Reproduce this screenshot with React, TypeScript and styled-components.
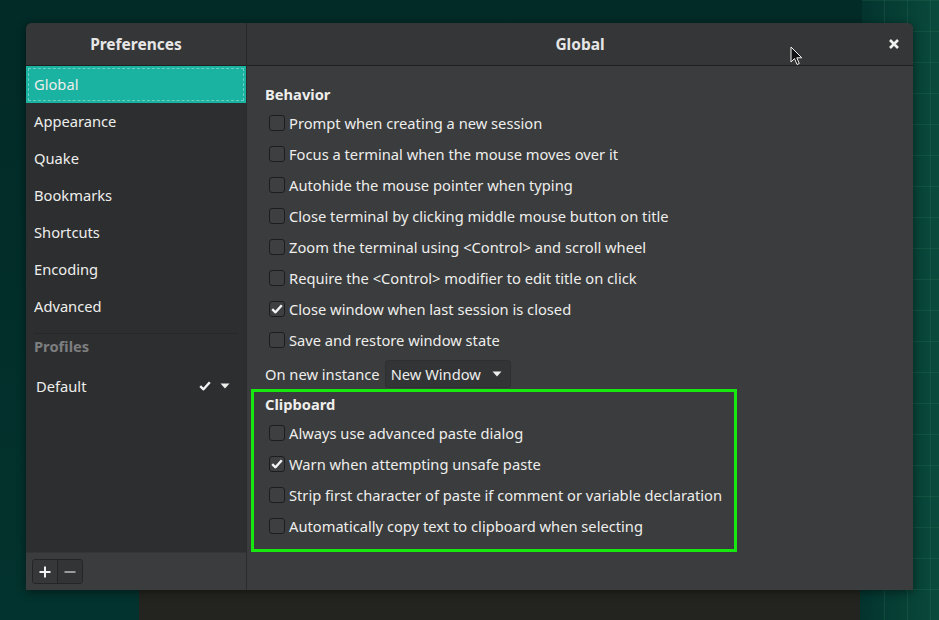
import React from "react";
import styled, { createGlobalStyle } from "styled-components";

const Global = createGlobalStyle`
  html, body { margin: 0; padding: 0; }
  body {
    width: 939px;
    height: 620px;
    overflow: hidden;
    font-family: "Noto Sans", "DejaVu Sans", sans-serif;
    font-size: 14.7px;
    color: #eeeeec;
  }
`;

const Desktop = styled.div`
  position: relative;
  width: 939px;
  height: 620px;
  box-sizing: border-box;
  padding: 23px 0 0 26px;
  background:
    linear-gradient(#23231f, #23231f) 139px 590px / 721px 30px no-repeat,
    repeating-linear-gradient(90deg, transparent 0 22px, rgba(80, 170, 120, 0.14) 22px 23px) 862px 0 / 77px 620px no-repeat,
    repeating-linear-gradient(0deg, transparent 0 30px, rgba(80, 170, 120, 0.12) 30px 31px) 862px 0 / 77px 620px no-repeat,
    linear-gradient(90deg, #03342e, #0a4a3c) 862px 0 / 77px 620px no-repeat,
    linear-gradient(180deg, #022a26 0%, #03332e 100%);
`;

const Window = styled.div`
  width: 887px;
  height: 567px;
  display: grid;
  grid-template-columns: 221px 1fr;
  border-radius: 6px 6px 0 0;
  overflow: hidden;
  box-shadow: 0 2px 10px rgba(0, 0, 0, 0.45);
  background: #3a3c3d;
`;

const Column = styled.div<{ $side?: boolean }>`
  display: flex;
  flex-direction: column;
  min-height: 0;
  background: ${(p) => (p.$side ? "#2d2e30" : "#3a3c3d")};
  border-right: ${(p) => (p.$side ? "1px solid #2a2b2c" : "none")};
`;

const Header = styled.div`
  height: 42px;
  flex: 0 0 42px;
  display: flex;
  align-items: center;
  justify-content: center;
  position: relative;
  background: #353637;
  border-bottom: 1px solid #1f2021;
  font-weight: 700;
  font-size: 15.5px;
  color: #e6e6e6;
`;

const HeaderDivider = styled.div`
  position: absolute;
  top: 0;
  bottom: 0;
  right: -1px;
  width: 1px;
  background: #262728;
`;

const CloseBtn = styled.div`
  position: absolute;
  right: 13px;
  top: 15px;
  width: 12px;
  height: 12px;
  display: flex;
`;

const SideList = styled.div`
  display: flex;
  flex-direction: column;
  flex: 1;
`;

const SideItem = styled.div<{ $active?: boolean }>`
  height: 37px;
  display: flex;
  align-items: center;
  padding: 0 0 2px 8px;
  box-sizing: border-box;
  background: ${(p) => (p.$active ? "#1ab2a1" : "transparent")};
  color: #eeeeec;
  position: relative;
  ${(p) =>
    p.$active
      ? `&::after { content: ""; position: absolute; inset: 2px 2px 2px 2px; border: 1px dashed rgba(255,255,255,0.35); }`
      : ""}
`;

const SideSep = styled.div`
  height: 1px;
  background: #262728;
  margin: 8px 8px 0 8px;
`;

const SideHeading = styled.div`
  height: 26px;
  display: flex;
  align-items: center;
  padding: 0 0 2px 8px;
  box-sizing: border-box;
  font-weight: 700;
  color: #7d7e7f;
`;

const ProfileRow = styled.div`
  height: 36px;
  margin-top: 8px;
  display: flex;
  align-items: center;
  padding: 0 16px 0 10px;
`;

const ProfileName = styled.span`
  flex: 1;
`;

const ProfileIcons = styled.div`
  display: flex;
  align-items: center;
  gap: 9px;
`;

const SideFooter = styled.div`
  height: 38px;
  flex: 0 0 38px;
  background: #3a3c3d;
  border-top: 1px solid #343536;
  box-sizing: border-box;
  display: flex;
  align-items: center;
  padding-left: 6px;
`;

const BtnGroup = styled.div`
  display: flex;
  border: 1px solid #242527;
  border-radius: 3px;
  overflow: hidden;
  height: 25px;
  box-sizing: border-box;
`;

const GroupBtn = styled.div<{ $dim?: boolean }>`
  width: 24px;
  height: 100%;
  display: flex;
  align-items: center;
  justify-content: center;
  background: ${(p) => (p.$dim ? "#323435" : "#353738")};
  & + & { border-left: 1px solid #242527; }
`;

const Body = styled.div`
  flex: 1;
  padding: 16px 4px 0 4px;
  display: flex;
  flex-direction: column;
  position: relative;
`;

const Section = styled.div<{ $framed?: boolean }>`
  width: 486px;
  box-sizing: border-box;
  padding: 0 0 ${(p) => (p.$framed ? "8px" : "0")} ${(p) => (p.$framed ? "11px" : "14px")};
  border: ${(p) => (p.$framed ? "3px solid #17e80f" : "none")};
  margin-top: ${(p) => (p.$framed ? "1px" : "0")};
`;

const SectionTitle = styled.div`
  height: 24px;
  display: flex;
  align-items: center;
  font-weight: 700;
  margin-bottom: 1px;
`;

const CheckRow = styled.div`
  height: 31px;
  display: flex;
  align-items: center;
  padding-left: 4px;
  gap: 4px;
  white-space: nowrap;
`;

const Box = styled.div`
  width: 16px;
  height: 16px;
  box-sizing: border-box;
  border: 1px solid #1c1d1e;
  border-radius: 3px;
  background: #3d3f40;
  display: flex;
  align-items: center;
  justify-content: center;
  flex: 0 0 16px;
`;

const InstanceRow = styled.div`
  height: 28px;
  margin-top: 5px;
  display: flex;
  align-items: center;
  gap: 5px;
  padding-left: 14px;
`;

const Combo = styled.div`
  width: 126px;
  height: 28px;
  box-sizing: border-box;
  border: 1px solid #2d2f30;
  border-radius: 3px;
  background: #323435;
  display: flex;
  align-items: center;
  justify-content: space-between;
  padding: 0 8px 0 5px;
`;

const Cursor = styled.svg`
  position: absolute;
  left: 790px;
  top: 46px;
`;

const Check = () => (
  <svg width="12" height="10" viewBox="0 0 12 10">
    <path d="M1.2 5.2 L4.5 8.3 L10.8 1.3" fill="none" stroke="#f4f4f4" strokeWidth="2.4" strokeLinejoin="round" />
  </svg>
);

const Arrow = () => (
  <svg width="10" height="6" viewBox="0 0 10 6">
    <path d="M0.5 0.5 H9.5 L5 5.5 Z" fill="#eeeeec" />
  </svg>
);

const CheckItem = ({ label, checked }: { label: string; checked?: boolean }) => (
  <CheckRow>
    <Box>{checked && <Check />}</Box>
    <span>{label}</span>
  </CheckRow>
);

const behavior: [string, boolean][] = [
  ["Prompt when creating a new session", false],
  ["Focus a terminal when the mouse moves over it", false],
  ["Autohide the mouse pointer when typing", false],
  ["Close terminal by clicking middle mouse button on title", false],
  ["Zoom the terminal using <Control> and scroll wheel", false],
  ["Require the <Control> modifier to edit title on click", false],
  ["Close window when last session is closed", true],
  ["Save and restore window state", false],
];

const clipboard: [string, boolean][] = [
  ["Always use advanced paste dialog", false],
  ["Warn when attempting unsafe paste", true],
  ["Strip first character of paste if comment or variable declaration", false],
  ["Automatically copy text to clipboard when selecting", false],
];

const pages = ["Global", "Appearance", "Quake", "Bookmarks", "Shortcuts", "Encoding", "Advanced"];

export default function App() {
  return (
    <>
      <Global />
      <Desktop>
        <Window>
          <Column $side>
            <Header>
              Preferences
              <HeaderDivider />
            </Header>
            <SideList>
              {pages.map((p, i) => (
                <SideItem key={p} $active={i === 0}>
                  {p}
                </SideItem>
              ))}
              <SideSep />
              <SideHeading>Profiles</SideHeading>
              <ProfileRow>
                <ProfileName>Default</ProfileName>
                <ProfileIcons>
                  <Check />
                  <Arrow />
                </ProfileIcons>
              </ProfileRow>
            </SideList>
            <SideFooter>
              <BtnGroup>
                <GroupBtn>
                  <svg width="12" height="12" viewBox="0 0 12 12">
                    <path d="M6 0.5 V11.5 M0.5 6 H11.5" stroke="#f2f2f2" strokeWidth="2" />
                  </svg>
                </GroupBtn>
                <GroupBtn $dim>
                  <svg width="12" height="12" viewBox="0 0 12 12">
                    <path d="M0.5 6 H11.5" stroke="#9a9b9c" strokeWidth="2" />
                  </svg>
                </GroupBtn>
              </BtnGroup>
            </SideFooter>
          </Column>
          <Column>
            <Header>
              Global
              <CloseBtn>
                <svg width="12" height="12" viewBox="0 0 12 12">
                  <path d="M2 2 L10 10 M10 2 L2 10" stroke="#f0f0f0" strokeWidth="2.6" />
                </svg>
              </CloseBtn>
            </Header>
            <Body>
              <Section>
                <SectionTitle>Behavior</SectionTitle>
                {behavior.map(([l, c]) => (
                  <CheckItem key={l} label={l} checked={c} />
                ))}
              </Section>
              <InstanceRow>
                <span>On new instance</span>
                <Combo>
                  <span>New Window</span>
                  <Arrow />
                </Combo>
              </InstanceRow>
              <Section $framed>
                <SectionTitle>Clipboard</SectionTitle>
                {clipboard.map(([l, c]) => (
                  <CheckItem key={l} label={l} checked={c} />
                ))}
              </Section>
            </Body>
          </Column>
        </Window>
        <Cursor width="14" height="20" viewBox="0 0 14 20">
          <path d="M1 1 V16 L4.5 12.5 L7 18.5 L9.3 17.5 L6.8 11.8 L11.8 11.8 Z" fill="#111" stroke="#f2f2f2" strokeWidth="1" />
        </Cursor>
      </Desktop>
    </>
  );
}
